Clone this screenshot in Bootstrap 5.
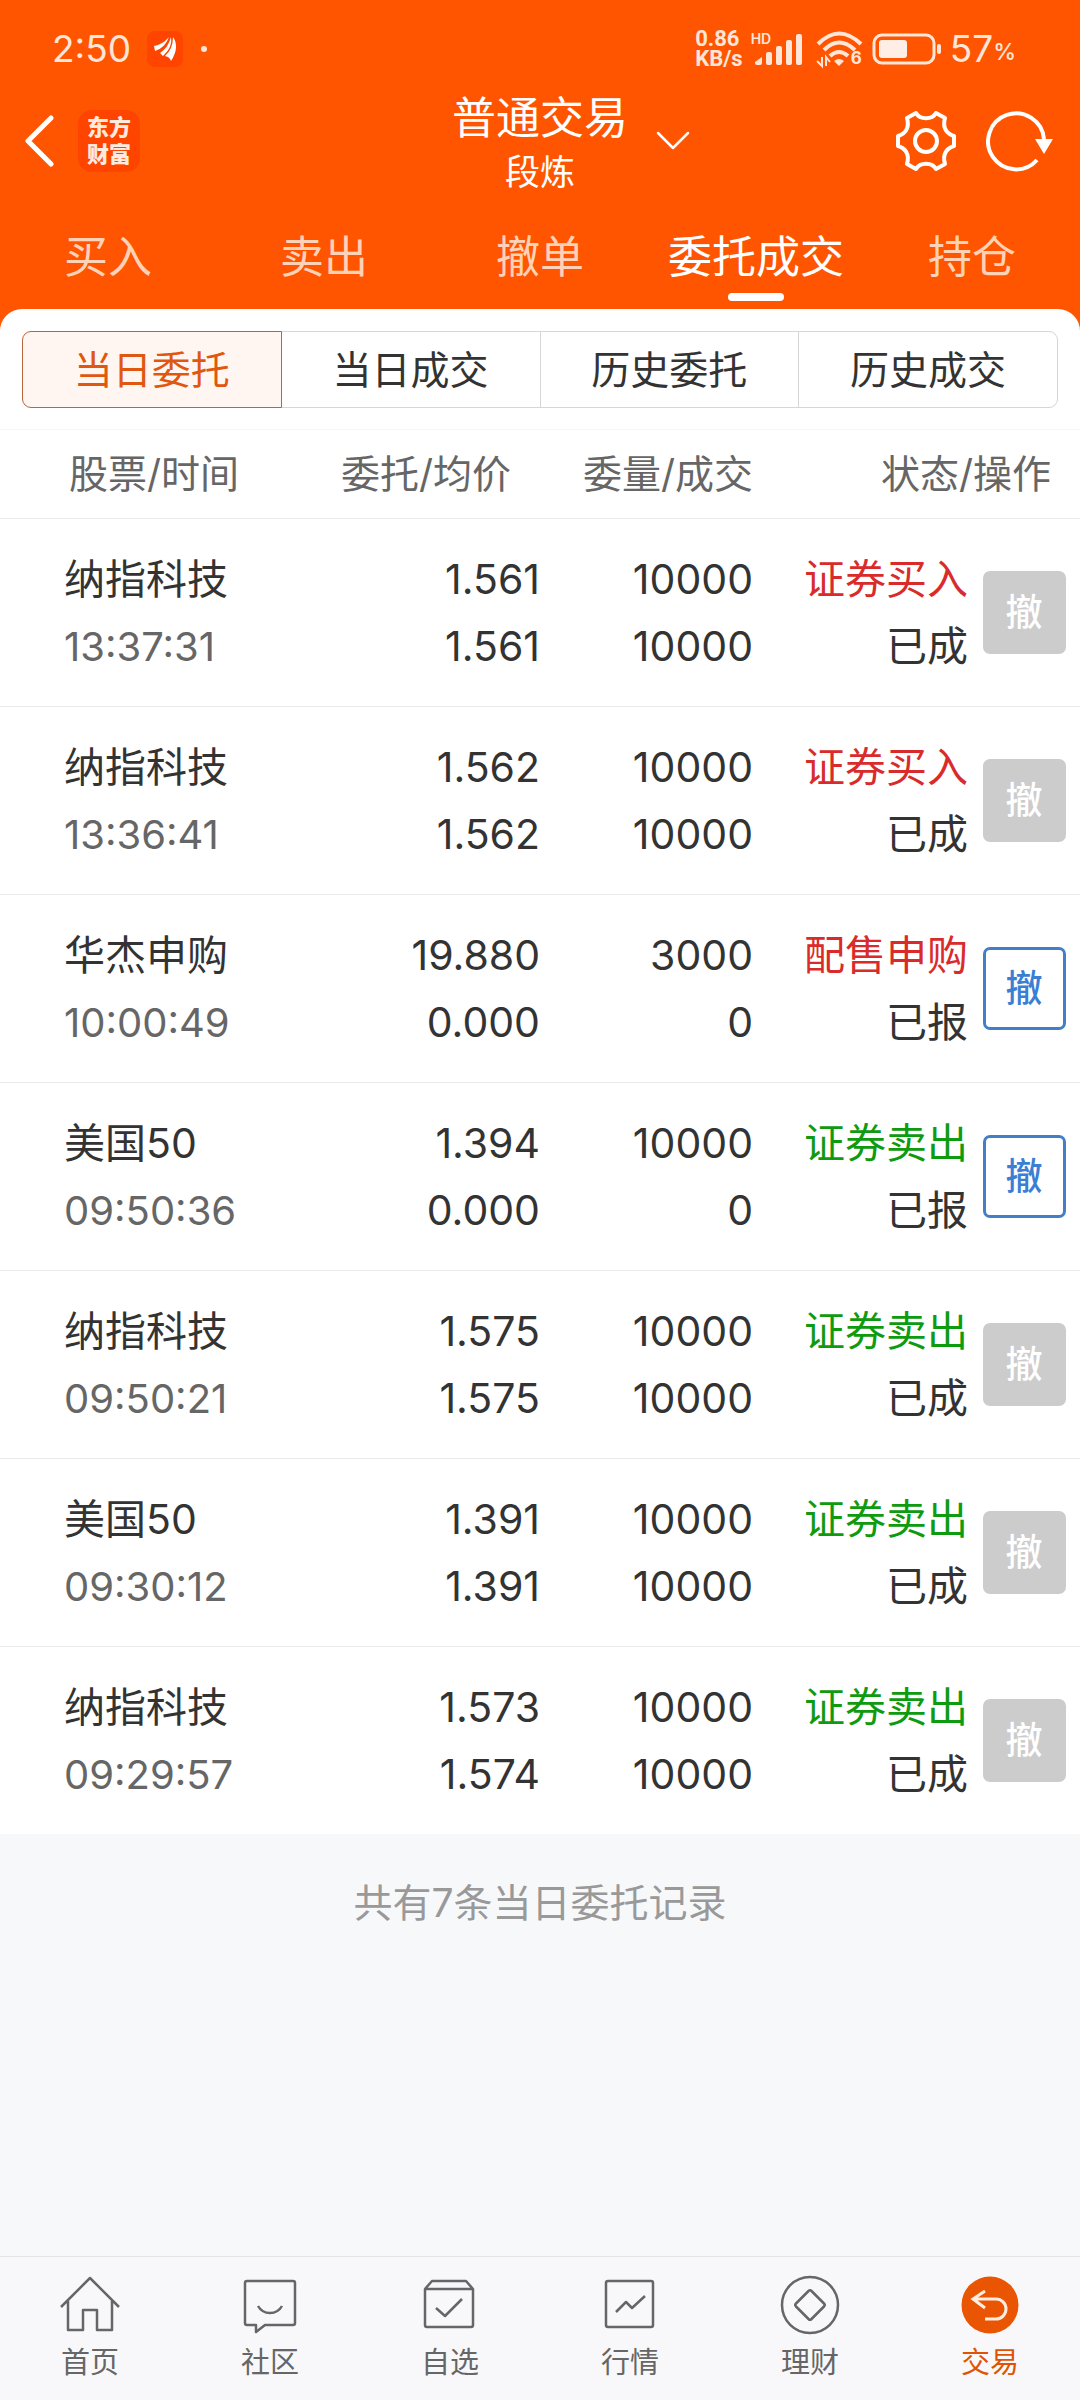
<!DOCTYPE html>
<html lang="zh-CN">
<head>
<meta charset="utf-8">
<meta name="viewport" content="width=device-width, initial-scale=1">
<title>普通交易</title>
<link href="https://cdn.jsdelivr.net/npm/bootstrap@5.3.0/dist/css/bootstrap.min.css" rel="stylesheet">
<style>
  body { font-family: Inter, "Noto Sans CJK SC", sans-serif; background: #f7f8fa; color: #333; }
  svg { display: block; flex: none; }
  button { font-family: inherit; }
  .line-icon { fill: none; stroke: currentColor; stroke-width: 2.5; stroke-linejoin: round; }

  .top-area { background: #ff5500; color: #fff; }
  .status-bar { height: 78px; padding: 20px 64px 0 52px; color: #ffe6d9; }
  .clock { font-size: 37px; line-height: 58px; }
  .speed { font-family: Roboto, sans-serif; font-size: 22px; font-weight: 700; line-height: 20px; }
  .hd { font-size: 14px; line-height: 16px; font-weight: 600; width: 22px; margin-bottom: 20px; }
  .bars { margin-left: -20px; }
  .wifi-six { font-size: 17px; line-height: 20px; font-weight: 700; margin: 18px 0 0 -14px; }
  .pct { font-size: 23px; line-height: 58px; font-weight: 500; padding-top: 6px; }
  .title-bar { height: 132px; padding: 0 24px 6px; }
  .side { flex: 1 1 0; }
  .plain { background: none; border: 0; padding: 0; color: inherit; }
  .logo { width: 62px; height: 62px; border-radius: 14px; background: #ff4400; color: #ffeadf; font-size: 22px; font-weight: 900; line-height: 27px; }
  .account { padding-top: 6px; }
  .main-title { font-size: 44px; line-height: 56px; }
  .sub-title { font-size: 35px; line-height: 52px; }
  .tools { gap: 28px; }
  .trade-tabs { height: 99px; }
  .trade-tabs a { flex: 1 1 0; font-size: 44px; line-height: 64px; padding: 15px 0 0; color: #ffd2b8; text-decoration: none; }
  .trade-tabs a::after { content: ""; display: block; width: 56px; height: 8px; border-radius: 4px; margin: 4px auto 0; }
  .trade-tabs a.active { color: #fff; }
  .trade-tabs a.active::after { background: #fff; }

  .panel { background: #fff; border-radius: 22px 22px 0 0; }
  .seg { padding: 22px 22px 21px; border-bottom: 1px solid #f6f6f6; }
  .seg .btn { --bs-btn-font-size: 39px; --bs-btn-line-height: 55px; --bs-btn-padding-y: 10px; --bs-btn-padding-x: 0;
    --bs-btn-color: #333; --bs-btn-border-color: #d4d6d8; --bs-btn-border-radius: 9px;
    --bs-btn-active-color: #e0580f; --bs-btn-active-bg: #fff6f2; --bs-btn-active-border-color: #b9653a; flex: 1 1 0; }

  .orders { --bs-table-bg: #fff; table-layout: fixed; color: #333; font-size: 41px; line-height: 67px; }
  .orders th { font-size: 39px; font-weight: 400; line-height: 56px; padding: 16px 0; color: #666; border-color: #ebebeb; }
  .orders td { padding: 27px 0 26px; border-color: #ebebeb; }
  .orders tbody tr:last-child td { border-bottom-color: #f7f8fa; }
  .c-price { width: 220px; }
  .c-qty { width: 213px; }
  .c-state { width: 215px; }
  .c-act { width: 112px; }
  .orders th:first-child { padding-left: 69px; }
  .orders td:first-child { padding-left: 64px; }
  .orders th.inset { padding-right: 29px; }
  .grey { color: #666; font-size: 40px; }
  .buy { color: #d92b2b; }
  .sell { color: #0f9b0f; }
  .orders .act { padding: 0; }
  .cancel { --bs-btn-font-size: 37px; --bs-btn-line-height: 56px; --bs-btn-padding-x: 0; --bs-btn-padding-y: 0; --bs-btn-border-width: 3px;
    --bs-btn-border-radius: 7px; --bs-btn-font-weight: 500; --bs-btn-color: #3b7fd4; --bs-btn-bg: #fff; --bs-btn-border-color: #437fc7;
    --bs-btn-disabled-color: #fff; --bs-btn-disabled-bg: #ccc; --bs-btn-disabled-border-color: #ccc; --bs-btn-disabled-opacity: 1;
    width: 83px; height: 83px; }
  .summary { font-size: 39px; line-height: 56px; padding-top: 40px; color: #999; }

  .bottom-nav { height: 144px; border-top: 1px solid #e2e3e5; background: #f8f8fb; }
  .bottom-nav a { flex: 1 1 0; gap: 4px; padding-top: 16px; color: #666; text-decoration: none; font-size: 29px; line-height: 44px; }
  .bottom-nav a.active { color: #e05206; }
</style>
<script src="https://cdn.jsdelivr.net/npm/bootstrap@5.3.0/dist/js/bootstrap.bundle.min.js"></script>
</head>
<body class="d-flex flex-column min-vh-100">

<header class="top-area">
  <div class="status-bar d-flex align-items-center">
    <span class="clock">2:50</span>
    <svg class="ms-3" width="36" height="36" viewBox="0 0 36 36"><rect width="36" height="36" rx="8" fill="#ff4400"/><g fill="#fff"><path d="M7 15Q15 14 22 6Q18 17 8 20Z"/><path d="M13 22Q21 17 24 6Q26 16 16 25Z"/><path d="M18 25Q26 18 26 6Q33 16 24 30Q23 26 18 25Z"/></g></svg>
    <svg class="ms-3" width="10" height="10" viewBox="0 0 10 10"><circle cx="5" cy="5" r="3" fill="#ffe6d9"/></svg>
    <div class="ms-auto d-flex align-items-center">
      <div class="speed"><div>0.86</div><div>KB/s</div></div>
      <span class="hd ms-2">HD</span>
      <svg class="bars" width="50" height="36" viewBox="0 0 50 36" fill="#ffe6d9"><path d="M2 31l7-5v6q0 2-2 2H4q-2 0-2-2z"/><rect x="13" y="21" width="6" height="13" rx="2"/><rect x="23" y="15" width="6" height="19" rx="2"/><rect x="33" y="9" width="6" height="25" rx="2"/><rect x="43" y="3" width="6" height="31" rx="2"/></svg>
      <svg class="ms-2 ps-1" width="54" height="40" viewBox="0 0 50 40" fill="none" stroke="#ffe6d9" stroke-width="4"><path d="M3 15Q24-6 46 15M9 21Q24 6 40 21M15 27Q24 19 33 27"/><path d="M19 32Q24 28 29 32L24 37Z" fill="#ffe6d9" stroke="none"/><path d="M7 28v9l-5-5M11 37v-9l4 5" stroke-width="2"/></svg>
      <span class="wifi-six">6</span>
      <svg class="ms-2" width="72" height="32" viewBox="0 0 72 32"><rect x="4" y="2" width="60" height="28" rx="8" fill="none" stroke="#ffe6d9" stroke-width="3"/><rect x="9" y="7" width="28" height="18" rx="3" fill="#ffeee6"/><rect x="67" y="11" width="4" height="10" rx="2" fill="#ffe6d9"/></svg>
      <span class="clock ms-2">57</span><span class="pct">%</span>
    </div>
  </div>

  <div class="title-bar d-flex align-items-center">
    <div class="side d-flex align-items-center">
      <button class="plain" aria-label="返回"><svg width="30" height="52" viewBox="0 0 30 52" fill="none" stroke="#fff" stroke-width="5" stroke-linecap="round" stroke-linejoin="round"><path d="M27 3L4 26l23 23"/></svg></button>
      <a class="logo d-flex flex-column align-items-center justify-content-center text-decoration-none ms-4" href="#"><span>东方</span><span>财富</span></a>
    </div>
    <div class="account text-center">
      <div class="main-title">普通交易</div>
      <div class="sub-title">段炼</div>
    </div>
    <div class="side d-flex align-items-center justify-content-between">
      <button class="plain ms-4 ps-1" aria-label="切换账户"><svg width="34" height="20" viewBox="0 0 34 20" fill="none" stroke="#fff" stroke-width="2.5" stroke-linecap="round" stroke-linejoin="round"><path d="M2 2l15 15L32 2"/></svg></button>
      <div class="tools d-flex">
      <button class="plain" aria-label="设置"><svg width="64" height="64" viewBox="0 0 64 64" fill="none" stroke="#fff" stroke-width="4" stroke-linejoin="round"><path d="M22 4C26 11 38 11 42 4L51 9C48 19 53 25 60 27V37C53 39 48 45 51 55L42 60C38 53 26 53 22 60L13 55C16 45 11 39 4 37V27C11 25 16 19 13 9Z"/><circle cx="32" cy="32" r="11"/></svg></button>
      <button class="plain" aria-label="刷新"><svg width="70" height="64" viewBox="0 0 70 64"><path d="M58 30A28 28 0 1 0 51 51" fill="none" stroke="#fff" stroke-width="4"/><path d="M49 30H67L58 45Z" fill="#fff"/></svg></button>
      </div>
    </div>
  </div>

  <nav class="trade-tabs d-flex text-center">
    <a href="#">买入</a><a href="#">卖出</a><a href="#">撤单</a><a class="active" href="#">委托成交</a><a href="#">持仓</a>
  </nav>

  <div class="panel">
    <div class="seg">
      <div class="btn-group d-flex">
        <button class="btn active">当日委托</button><button class="btn">当日成交</button><button class="btn">历史委托</button><button class="btn">历史成交</button>
      </div>
    </div>
  </div>
</header>

<main>
  <table class="orders table mb-0">
    <colgroup><col><col class="c-price"><col class="c-qty"><col class="c-state"><col class="c-act"></colgroup>
    <thead>
      <tr><th>股票/时间</th><th class="text-end inset">委托/均价</th><th class="text-end">委量/成交</th><th class="text-end inset" colspan="2">状态/操作</th></tr>
    </thead>
    <tbody>
      <tr><td>纳指科技<br><span class="grey">13:37:31</span></td><td class="text-end">1.561<br>1.561</td><td class="text-end">10000<br>10000</td><td class="text-end"><span class="buy">证券买入</span><br>已成</td><td class="act text-center align-middle"><button class="btn cancel" disabled>撤</button></td></tr>
      <tr><td>纳指科技<br><span class="grey">13:36:41</span></td><td class="text-end">1.562<br>1.562</td><td class="text-end">10000<br>10000</td><td class="text-end"><span class="buy">证券买入</span><br>已成</td><td class="act text-center align-middle"><button class="btn cancel" disabled>撤</button></td></tr>
      <tr><td>华杰申购<br><span class="grey">10:00:49</span></td><td class="text-end">19.880<br>0.000</td><td class="text-end">3000<br>0</td><td class="text-end"><span class="buy">配售申购</span><br>已报</td><td class="act text-center align-middle"><button class="btn cancel">撤</button></td></tr>
      <tr><td>美国50<br><span class="grey">09:50:36</span></td><td class="text-end">1.394<br>0.000</td><td class="text-end">10000<br>0</td><td class="text-end"><span class="sell">证券卖出</span><br>已报</td><td class="act text-center align-middle"><button class="btn cancel">撤</button></td></tr>
      <tr><td>纳指科技<br><span class="grey">09:50:21</span></td><td class="text-end">1.575<br>1.575</td><td class="text-end">10000<br>10000</td><td class="text-end"><span class="sell">证券卖出</span><br>已成</td><td class="act text-center align-middle"><button class="btn cancel" disabled>撤</button></td></tr>
      <tr><td>美国50<br><span class="grey">09:30:12</span></td><td class="text-end">1.391<br>1.391</td><td class="text-end">10000<br>10000</td><td class="text-end"><span class="sell">证券卖出</span><br>已成</td><td class="act text-center align-middle"><button class="btn cancel" disabled>撤</button></td></tr>
      <tr><td>纳指科技<br><span class="grey">09:29:57</span></td><td class="text-end">1.573<br>1.574</td><td class="text-end">10000<br>10000</td><td class="text-end"><span class="sell">证券卖出</span><br>已成</td><td class="act text-center align-middle"><button class="btn cancel" disabled>撤</button></td></tr>
    </tbody>
  </table>
  <p class="summary text-center mb-0">共有7条当日委托记录</p>
</main>

<nav class="bottom-nav d-flex mt-auto text-center">
  <a class="d-flex flex-column align-items-center" href="#"><svg class="line-icon" width="64" height="64" viewBox="0 0 64 64"><path d="M3 34L32 5L61 34M10 28V57H25V37H39V57H54V28"/></svg>首页</a>
  <a class="d-flex flex-column align-items-center" href="#"><svg class="line-icon" width="64" height="64" viewBox="0 0 64 64"><path d="M9 8H55Q57 8 57 10V50Q57 52 55 52H27L18 59V52H9Q7 52 7 50V10Q7 8 9 8ZM20 33Q24 40 32 40T44 33"/></svg>社区</a>
  <a class="d-flex flex-column align-items-center" href="#"><svg class="line-icon" width="64" height="64" viewBox="0 0 64 64"><path d="M7 16L14 8H48L55 16V52Q55 54 53 54H9Q7 54 7 52ZM7 16H55M18 35L27 43L44 26"/></svg>自选</a>
  <a class="d-flex flex-column align-items-center" href="#"><svg class="line-icon" width="64" height="64" viewBox="0 0 64 64"><rect x="8" y="8" width="47" height="46" rx="2"/><path d="M18 39L28 29L34 35L47 23"/></svg>行情</a>
  <a class="d-flex flex-column align-items-center" href="#"><svg class="line-icon" width="64" height="64" viewBox="0 0 64 64"><circle cx="32" cy="32" r="28"/><path d="M30.500 18L18 30.500Q16.500 32 18 33.500L30.500 46Q32 47.500 33.500 46L46 33.500Q47.500 32 46 30.500L33.500 18Q32 16.500 30.500 18Z"/></svg>理财</a>
  <a class="active d-flex flex-column align-items-center" href="#"><svg width="64" height="64" viewBox="0 0 64 64" fill="none" stroke="#ffeee0" stroke-width="3"><circle cx="32" cy="32" r="28.500" fill="#ea5504" stroke="none"/><path d="M27 18L15 26L27 35M15 26H38A10 10 0 0 1 38 46H27"/></svg>交易</a>
</nav>
</body>
</html>
